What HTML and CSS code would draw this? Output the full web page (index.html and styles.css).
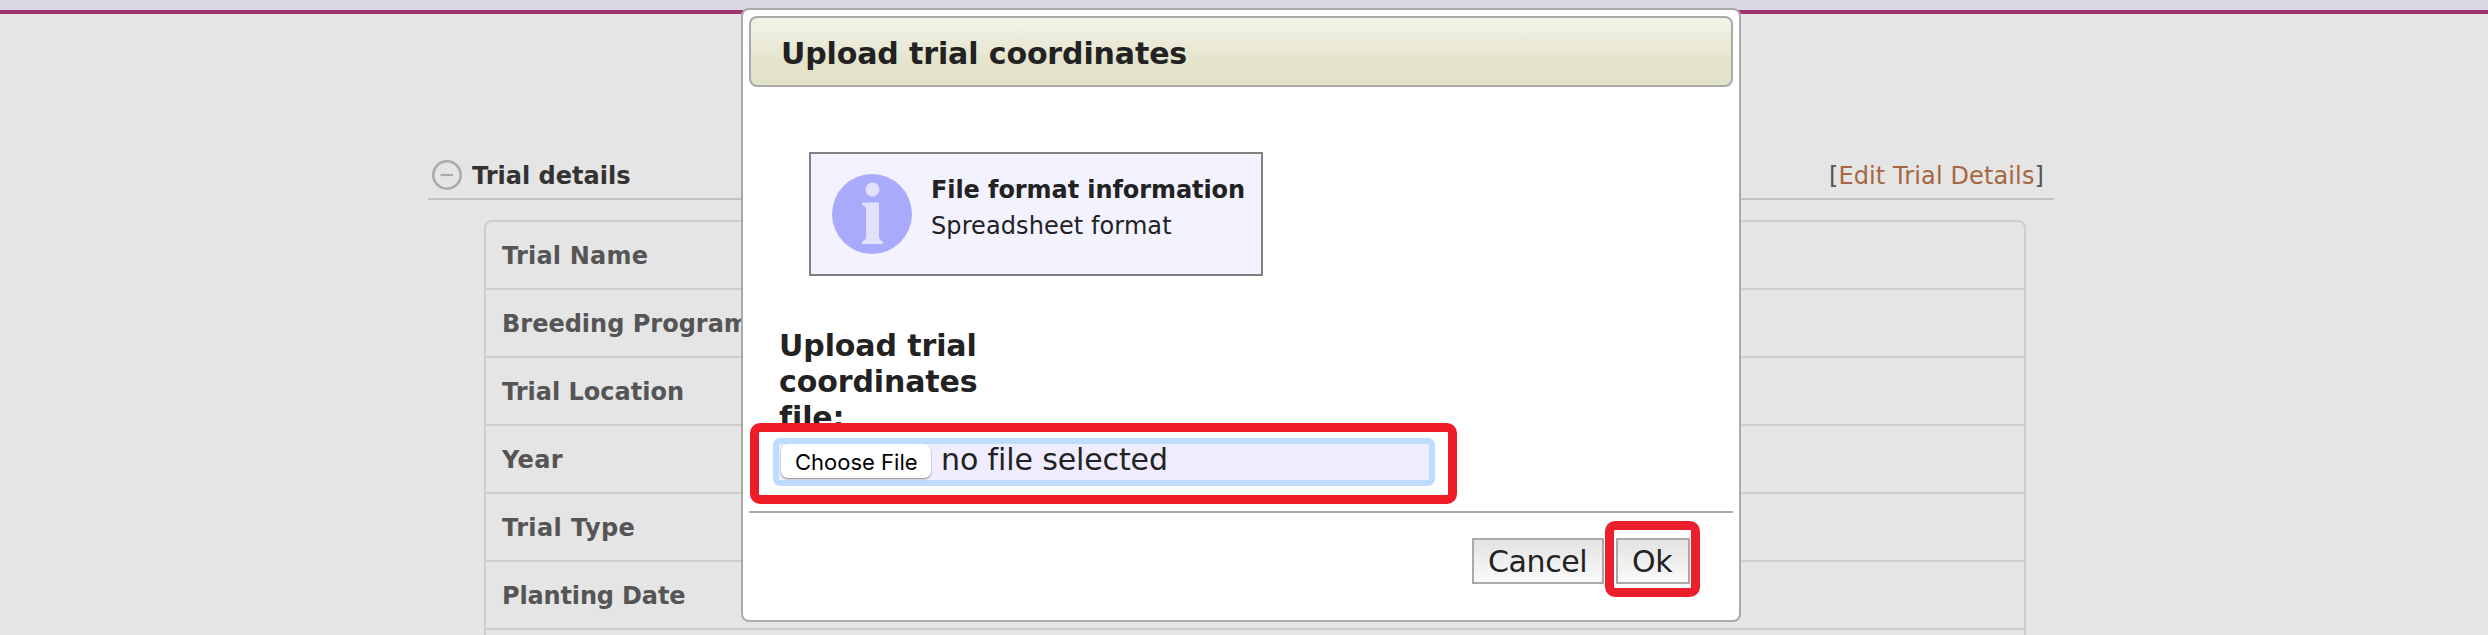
FILE: index.html
```
<!DOCTYPE html>
<html lang="en">
<head>
<meta charset="utf-8">
<title>Trial details</title>
<link rel="stylesheet" href="styles.css">
</head>
<body>
<div class="topbar"></div>
<main class="page">
  <header class="section-head">
    <svg class="toggle" viewBox="0 0 30 30"><circle cx="15" cy="15" r="13.7" fill="none" stroke="#a9abaa" stroke-width="2.6"/><path d="M8.500 15h12.500" stroke="#a9abaa" stroke-width="2.2"/></svg>
    <h2 class="section-title">Trial details</h2>
    <div class="edit">[<a class="edit-link">Edit Trial Details</a>]</div>
  </header>
  <div class="details">
    <div class="row row-name">Trial Name</div>
    <div class="row">Breeding Program</div>
    <div class="row">Trial Location</div>
    <div class="row row-year">Year</div>
    <div class="row row-type">Trial Type</div>
    <div class="row row-date">Planting Date</div>
  </div>
</main>
<section class="dialog">
  <h1 class="dialog-title">Upload trial coordinates</h1>
  <div class="dialog-body">
    <div class="info">
      <svg class="info-icon" viewBox="0 0 80 80"><circle cx="40" cy="40" r="40" fill="#aaaafc"/><circle cx="40.500" cy="15.500" r="7" fill="#e1e1fe"/><path d="M30 28.500h17v34q0 4 4 5v2.500H30v-2.500q4-1 4-5V35q0-3-4-4z" fill="#e1e1fe"/></svg>
      <div class="info-text">
        <strong class="info-strong">File format information</strong>
        <span class="info-link">Spreadsheet format</span>
      </div>
    </div>
    <div class="upload-label">Upload trial<br>coordinates<br>file:</div>
    <div class="file-highlight">
      <div class="file-input">
        <span class="choose">Choose File</span>
        <span class="none">no file selected</span>
      </div>
    </div>
  </div>
  <footer class="dialog-foot">
    <span class="btn cancel">Cancel</span>
    <span class="btn ok">Ok</span>
  </footer>
</section>
</body>
</html>
```

FILE: styles.css
```
*, *::after { box-sizing: border-box; }
body { margin: 0; height: 635px; overflow: hidden; position: relative; background: #e5e5e5; font-family: "DejaVu Sans", Verdana, sans-serif; color: #222; }
.topbar { height: 14px; background: #d9d9e5; border-bottom: 4px solid #a0346e; }
.page { width: 1626px; height: 621px; overflow: hidden; margin-left: 428px; padding-top: 136px; }
.section-head { display: flex; height: 50px; padding: 0 10px 0 4px; align-items: center; border-bottom: 2px solid #c2c2c2; }
.toggle { width: 30px; height: 30px; margin: 2px 10px 0 0; }
.section-title { margin: 3px 0 0; font-size: 24px; line-height: 28px; color: #333; }
.edit { margin: 3px 0 0 auto; font-size: 24px; line-height: 28px; letter-spacing: 0.12px; color: #555; }
.edit-link { color: #a5673f; }
.details { width: 1542px; height: 440px; margin: 20px 0 0 56px; border: 2px solid #cecece; border-radius: 8px; }
.row { height: 68px; padding: 18px 0 0 16px; border-bottom: 2px solid #cecece; font-size: 24px; line-height: 32px; font-weight: bold; color: #555; }
.row-name { letter-spacing: 0.2px; }
.row-year { letter-spacing: 0.4px; }
.row-type { letter-spacing: 0.4px; }
.row-date { letter-spacing: -0.15px; }
.dialog { position: absolute; left: 741px; top: 8px; width: 1000px; height: 614px; padding: 6px; background: #fff; border: 2px solid #aaa; border-radius: 8px; }
.dialog-title { margin: 0; height: 71px; padding: 0 30px; border: 2px solid #aaa; border-radius: 8px; background: linear-gradient(#f1f1e6 8%, #e3e3ca 70%); font-size: 30px; line-height: 71px; letter-spacing: -0.12px; }
.dialog-body { height: 424px; padding: 65px 0 0 0; display: flex; flex-direction: column; align-items: flex-start; }
.info { display: flex; width: 454px; height: 124px; margin-left: 60px; padding: 20px 0 0 21px; border: 2px solid #808080; background: #f3f3ff; }
.info-icon { width: 80px; height: 80px; flex: none; }
.info-text { display: flex; flex-direction: column; padding-left: 19px; font-size: 24px; line-height: 36px; white-space: nowrap; }
.info-strong { margin-top: -2px; letter-spacing: -0.08px; }
.info-link { letter-spacing: 0.1px; }
.upload-label { margin: 52px 0 0 30px; height: 95px; font-size: 30px; line-height: 36px; letter-spacing: -0.1px; font-weight: bold; }
.file-highlight { position: relative; width: 707px; height: 81px; flex: none; margin-left: 1px; padding: 6px 13px; border: 9px solid #ef1c25; border-radius: 10px; }
.file-input { display: flex; width: 662px; height: 48px; margin-left: 1px; padding: 0 2px; border: 6px solid #bedcff; border-radius: 7px; background: #efedff; white-space: nowrap; }
.choose { width: 150px; height: 34px; border-radius: 7px; background: #fff; box-shadow: 0 1px 2px #888; padding-left: 14px; font: 22px/36px Inter, sans-serif; color: #000; }
.none { margin-left: 10px; font-size: 30px; line-height: 32px; letter-spacing: -0.12px; }
.dialog-foot { display: flex; border-top: 2px solid #aaa; padding: 25px 0 0 723px; }
.btn { position: relative; height: 46px; border: 2px solid #aaa; background: linear-gradient(#e3e3e3, #fafafa); font-size: 30px; line-height: 44px; letter-spacing: -0.4px; padding-left: 14px; }
.cancel { width: 132px; }
.ok { width: 74px; margin-left: 12px; }
.ok::after { content: ""; position: absolute; left: -13px; top: -19px; width: 95px; height: 76px; border: 9px solid #ec202d; border-radius: 10px; }
```
